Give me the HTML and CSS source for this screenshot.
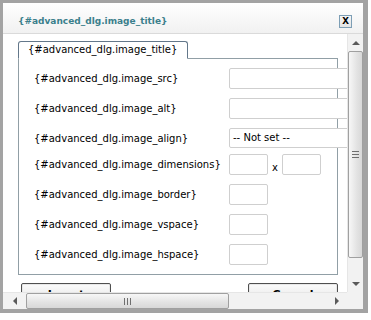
FILE: index.html
```html
<!DOCTYPE html>
<html>
<head>
<meta charset="utf-8">
<link rel="stylesheet" href="styles.css">
</head>
<body>
<div class="window">
  <div class="titlebar">
    <span class="title">{#advanced_dlg.image_title}</span>
    <span class="close">x</span>
  </div>
  <div class="frame">
    <div class="viewport">
      <div class="tabs"><div class="tab">{#advanced_dlg.image_title}</div></div>
      <div class="panel">
        <div class="row"><label>{#advanced_dlg.image_src}</label><span class="field wide"></span></div>
        <div class="row"><label>{#advanced_dlg.image_alt}</label><span class="field wide"></span></div>
        <div class="row short"><label>{#advanced_dlg.image_align}</label><span class="field select">-- Not set --</span></div>
        <div class="row"><label>{#advanced_dlg.image_dimensions}</label><span class="field small"></span><span class="times">x</span><span class="field small"></span></div>
        <div class="row"><label>{#advanced_dlg.image_border}</label><span class="field small"></span></div>
        <div class="row"><label>{#advanced_dlg.image_vspace}</label><span class="field small"></span></div>
        <div class="row last"><label>{#advanced_dlg.image_hspace}</label><span class="field small"></span></div>
      </div>
      <div class="buttons">
        <span class="btn">Insert</span>
        <span class="btn">Cancel</span>
      </div>
    </div>
    <div class="vscroll">
      <div class="arrow-btn"><span class="tri up"></span></div>
      <div class="vthumb"><span class="grip-v"></span></div>
      <div class="vtrack"></div>
      <div class="arrow-btn"><span class="tri down"></span></div>
    </div>
    <div class="hscroll">
      <div class="arrow-btn h"><span class="tri left"></span></div>
      <div class="hthumb"><span class="grip-h"></span></div>
      <div class="htrack"></div>
      <div class="arrow-btn h right-btn"><span class="tri right"></span></div>
    </div>
    <div class="corner"></div>
  </div>
</div>
</body>
</html>
```
FILE: styles.css
```css
html, body {
  margin: 0;
  padding: 0;
  background: #ffffff;
}
body {
  font-family: "DejaVu Sans", Verdana, sans-serif;
  font-size: 10px;
  color: #000;
}
.window {
  width: 368px;
  height: 313px;
  box-sizing: border-box;
  border-style: solid;
  border-color: #a3a3a3;
  border-width: 3px 5px 4px 3px;
  background: #fff;
  display: flex;
  flex-direction: column;
}
.titlebar {
  height: 31px;
  box-sizing: border-box;
  padding: 6px 11px 0 15px;
  display: flex;
  align-items: center;
  justify-content: space-between;
  background: linear-gradient(#ffffff, #f1f1f1);
  border-bottom: 1px solid #dadada;
  flex: none;
}
.title {
  font-family: "DejaVu Sans", sans-serif;
  font-weight: bold;
  font-size: 9px;
  color: #3b7f8c;
}
.close {
  width: 13px;
  height: 13px;
  box-sizing: border-box;
  border: 1px solid #7d9eb5;
  background: linear-gradient(#f6f6f6, #e4e4e4);
  font-family: "Liberation Sans", Arial, sans-serif;
  font-weight: bold;
  font-size: 12px;
  line-height: 9px;
  text-align: center;
  color: #000;
}
.frame {
  flex: 1;
  display: grid;
  grid-template-columns: 344px 16px;
  grid-template-rows: 258px 17px;
}
.viewport {
  overflow: hidden;
  padding-top: 7px;
  box-sizing: border-box;
}
.tabs {
  display: flex;
  margin-left: 15px;
  position: relative;
  z-index: 2;
}
.tab {
  width: 170px;
  height: 18px;
  box-sizing: border-box;
  border: 1px solid #63778a;
  border-bottom: 1px solid #fff;
  border-radius: 3px 3px 0 0;
  background: #fff;
  padding: 2px 0 0 9px;
  margin-bottom: -1px;
  white-space: nowrap;
}
.panel {
  width: 320px;
  height: 217px;
  box-sizing: border-box;
  margin-left: 15px;
  border: 1px solid #919fa6;
  padding: 9px 0 0 15px;
  position: relative;
  z-index: 1;
}
.row {
  display: flex;
  align-items: center;
  height: 30px;
  align-content: flex-start;
}
.row > * {
  align-self: flex-start;
}
.row label {
  width: 195px;
  flex: none;
  line-height: 21px;
  white-space: nowrap;
}
.row.short {
  height: 26px;
}
.field {
  display: block;
  height: 21px;
  box-sizing: border-box;
  border: 1px solid #cfcfcf;
  border-radius: 2px;
  background: #fff;
  flex: none;
}
.field.wide {
  width: 170px;
}
.field.select {
  width: 170px;
  height: 20px;
  padding: 3px 0 0 3px;
  white-space: nowrap;
}
.field.small {
  width: 39px;
}
.times {
  width: 14px;
  flex: none;
  text-align: center;
  line-height: 27px;
}
.buttons {
  display: flex;
  justify-content: space-between;
  width: 317px;
  margin: 8px 0 0 18px;
}
.btn {
  width: 90px;
  height: 23px;
  box-sizing: border-box;
  border: 1px solid #4f4f4f;
  border-radius: 2px;
  background: linear-gradient(#fbfbfb, #e2e2e2);
  box-shadow: inset 0 0 0 1px #e8e8e8;
  font-weight: bold;
  font-size: 11px;
  text-align: center;
  line-height: 21px;
}
.vscroll {
  display: flex;
  flex-direction: column;
  background: #f2f2f2;
  border-left: 1px solid #e6e6e6;
}
.arrow-btn {
  height: 17px;
  display: flex;
  align-items: center;
  justify-content: center;
  flex: none;
}
.arrow-btn.h {
  width: 22px;
  height: auto;
}
.arrow-btn.right-btn {
  width: 20px;
}
.tri {
  width: 0;
  height: 0;
  border: 4px solid transparent;
}
.tri.up {
  border-bottom-color: #5a5a5a;
  border-top-width: 0;
  margin-top: 1px;
}
.tri.down {
  border-top-color: #5a5a5a;
  border-bottom-width: 0;
}
.tri.left {
  border-right-color: #5a5a5a;
  border-left-width: 0;
  margin-left: 2px;
}
.tri.right {
  border-left-color: #5a5a5a;
  border-right-width: 0;
}
.vthumb {
  height: 207px;
  margin: 0 0 0 0;
  box-sizing: border-box;
  border: 1px solid #a0a0a0;
  border-radius: 2px;
  background: linear-gradient(90deg, #f7f7f7, #e3e3e3 60%, #d8d8d8);
  display: flex;
  align-items: center;
  justify-content: center;
  flex: none;
}
.grip-v {
  width: 7px;
  height: 5px;
  border-top: 1px solid #6f6f6f;
  border-bottom: 1px solid #6f6f6f;
  position: relative;
}
.grip-v::after {
  content: "";
  position: absolute;
  left: 0;
  right: 0;
  top: 2px;
  border-top: 1px solid #6f6f6f;
}
.vtrack {
  flex: 1;
}
.hscroll {
  display: flex;
  background: #f2f2f2;
  border-top: 1px solid #e6e6e6;
}
.hthumb {
  width: 203px;
  margin-left: 1px;
  box-sizing: border-box;
  border: 1px solid #a0a0a0;
  border-radius: 2px;
  background: linear-gradient(#f7f7f7, #e3e3e3 60%, #d8d8d8);
  display: flex;
  align-items: center;
  justify-content: center;
  flex: none;
}
.grip-h {
  width: 5px;
  height: 7px;
  border-left: 1px solid #6f6f6f;
  border-right: 1px solid #6f6f6f;
  position: relative;
}
.grip-h::after {
  content: "";
  position: absolute;
  top: 0;
  bottom: 0;
  left: 2px;
  border-left: 1px solid #6f6f6f;
}
.htrack {
  flex: 1;
}
.corner {
  background: #f2f2f2;
}
```
